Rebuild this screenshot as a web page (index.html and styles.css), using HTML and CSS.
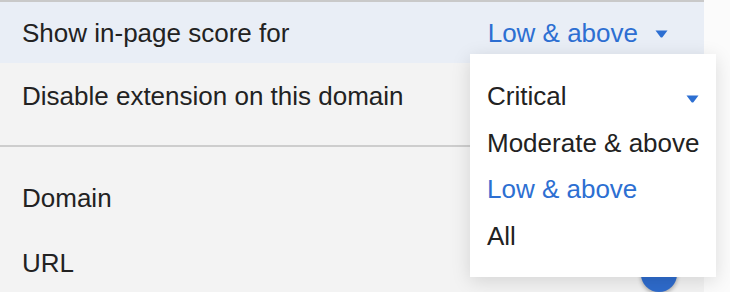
FILE: index.html
```html
<!DOCTYPE html>
<html lang="en">
<head>
  <meta charset="UTF-8" />
  <title>Settings</title>
  <link rel="stylesheet" href="styles.css">
</head>
<body>
  <div class="panel">
    <div class="row row-active">
      <span>Show in-page score for</span>
      <span class="select">
        Low &amp; above
        <svg class="caret" width="13" height="8" viewBox="0 0 13 8"><path d="M0.5 0.5 H12.5 L7.6 6.9 Q6.5 8 5.4 6.9 Z" fill="#2d6fd2"/></svg>
      </span>
    </div>
    <div class="row row-split">
      <span>Disable extension on this domain</span>
    </div>
    <div class="row row-plain">
      <span>Domain</span>
    </div>
    <div class="row row-plain">
      <span>URL</span>
      <span class="toggle"><span class="knob"></span></span>
    </div>
  </div>

  <div class="menu">
    <div class="menu-item">
      Critical
      <svg class="caret" width="13" height="8" viewBox="0 0 13 8"><path d="M0.5 0.5 H12.5 L7.6 6.9 Q6.5 8 5.4 6.9 Z" fill="#2d6fd2"/></svg>
    </div>
    <div class="menu-item">Moderate &amp; above</div>
    <div class="menu-item selected">Low &amp; above</div>
    <div class="menu-item">All</div>
  </div>
</body>
</html>
```

FILE: styles.css
```css
body {
  margin: 0;
  background: #fbfbfb;
  font-family: 'Liberation Sans', Arial, sans-serif;
  font-size: 26px;
  line-height: 30px;
  color: #222;
  height: 292px;
  overflow: hidden;
}

.panel {
  width: 704px;
  height: 290px;
  background: #f3f3f3;
  border-top: 2px solid #c9c9c9;
}

.row {
  display: flex;
  justify-content: space-between;
  align-items: flex-start;
  padding: 0 36px 0 22px;
  white-space: nowrap;
}

.row-active {
  background: #e9eef6;
  padding-top: 16px;
  height: 45px;
}

.row-split {
  padding-top: 18px;
  height: 64px;
  border-bottom: 2px solid #cdcdcd;
}

.row-plain {
  padding-top: 35px;
  padding-right: 27px;
}

.row-plain:nth-child(3) {
  padding-top: 36px;
}

.select {
  color: #2d6fd2;
  display: flex;
  align-items: center;
}

.caret {
  margin-left: 17px;
  margin-top: 2px;
}

.toggle {
  margin-top: 8px;
}

.knob {
  display: block;
  width: 36px;
  height: 36px;
  border-radius: 50%;
  background: #2e6bcc;
  box-shadow: 0 2px 4px rgba(0,0,0,0.3);
}

.menu {
  position: absolute;
  left: 470px;
  top: 54px;
  width: 212px;
  height: 196px;
  padding: 27px 17px 0 17px;
  background: #fff;
  box-shadow: 0 4px 18px rgba(0,0,0,0.13);
  display: flex;
  flex-direction: column;
  gap: 16.5px;
  white-space: nowrap;
}

.menu-item {
  display: flex;
  justify-content: space-between;
  align-items: center;
}

.menu-item .caret {
  margin-top: 5px;
}

.selected {
  color: #2d6fd2;
}
```
